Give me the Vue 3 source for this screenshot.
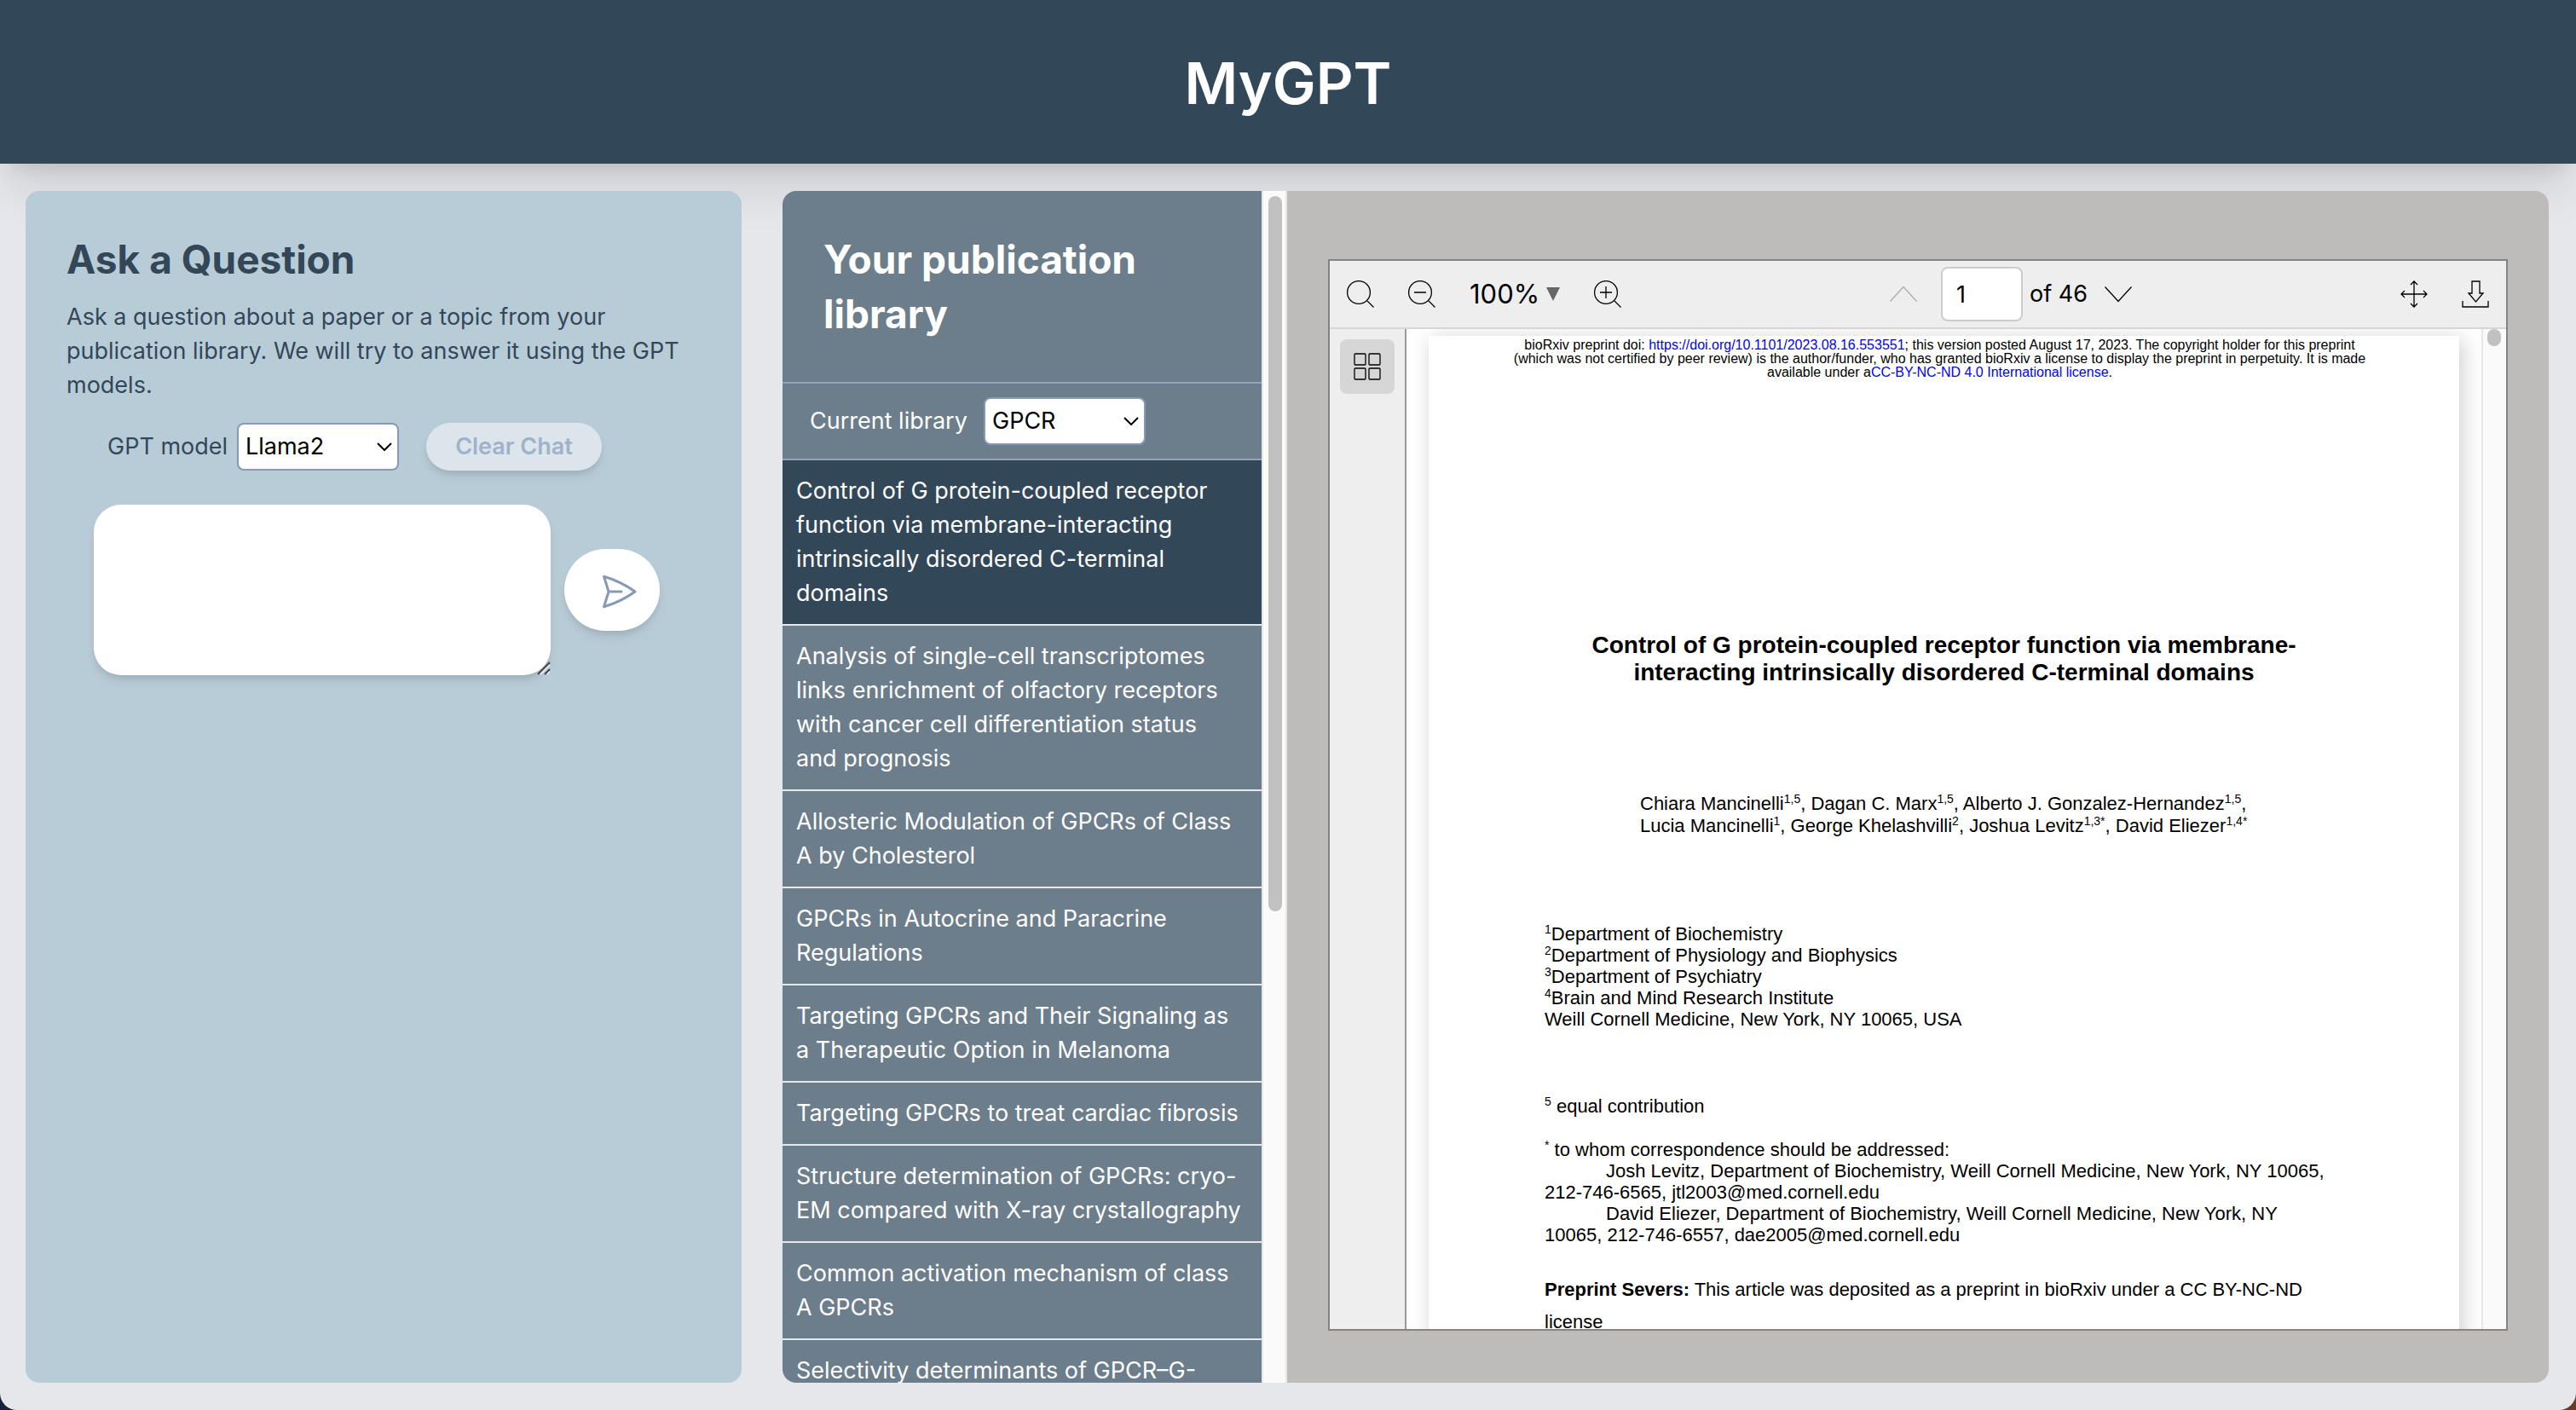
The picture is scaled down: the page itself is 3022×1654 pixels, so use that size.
<script setup>
import { ref } from 'vue'

const model = ref('Llama2')
const library = ref('GPCR')
const question = ref('')
const page = ref('1')
const selected = ref(0)

const papers = [
  'Control of G protein-coupled receptor function via membrane-interacting intrinsically disordered C-terminal domains',
  'Analysis of single-cell transcriptomes links enrichment of olfactory receptors with cancer cell differentiation status and\u00a0prognosis',
  'Allosteric Modulation of GPCRs of Class A by Cholesterol',
  'GPCRs in Autocrine and Paracrine Regulations',
  'Targeting GPCRs and Their Signaling as a\u00a0Therapeutic Option in Melanoma',
  'Targeting GPCRs to treat cardiac fibrosis',
  'Structure determination of GPCRs: cryo-EM compared with X-ray crystallography',
  'Common activation mechanism of class A GPCRs',
  'Selectivity determinants of GPCR–G-',
]

const departments = [
  'Department of Biochemistry',
  'Department of Physiology and Biophysics',
  'Department of Psychiatry',
  'Brain and Mind Research Institute',
]
</script>

<template>
  <div class="shell">
    <header class="banner">
      <h1>MyGPT</h1>
    </header>
    <main class="workspace">
      <section class="ask">
        <h2>Ask a Question</h2>
        <p class="intro">Ask a question about a paper or a topic from your publication library. We will try to answer it using the GPT models.</p>
        <div class="model-row">
          <label for="model">GPT model</label>
          <span class="picker">
            <select id="model" v-model="model"><option>Llama2</option></select>
            <svg viewBox="0 0 18 10"><path d="M1 1l8 8 8-8" /></svg>
          </span>
          <button class="clear" type="button" disabled>Clear Chat</button>
        </div>
        <form class="prompt" @submit.prevent>
          <div class="question">
            <textarea v-model="question" aria-label="Question"></textarea>
            <svg viewBox="0 0 16 16"><path d="M1 15L15 1M9 15l6-6" /><path class="glint" d="M4 15L15 4M12 15l3-3" /></svg>
          </div>
          <button class="send" type="submit" aria-label="Send">
            <svg viewBox="0 0 24 24"><path d="M6 12L3.269 3.126A59.768 59.768 0 0121.485 12 59.77 59.77 0 013.27 20.876L5.999 12zm0 0h7.5" /></svg>
          </button>
        </form>
      </section>

      <div class="reader">
        <section class="library">
          <h2>Your publication library</h2>
          <div class="library-row">
            <label for="library">Current library</label>
            <span class="picker">
              <select id="library" v-model="library"><option>GPCR</option></select>
              <svg viewBox="0 0 18 10"><path d="M1 1l8 8 8-8" /></svg>
            </span>
          </div>
          <ul class="papers">
            <li v-for="(paper, i) in papers" :key="paper">
              <button type="button" :class="{ active: i === selected }" @click="selected = i">{{ paper }}</button>
            </li>
          </ul>
        </section>
        <div class="list-track"><div class="list-thumb"></div></div>

        <section class="viewer-area">
          <div class="viewer">
            <div class="toolbar">
              <button type="button" aria-label="Search">
                <svg viewBox="0 0 32 32"><circle cx="14" cy="14" r="13.4" /><path d="M24 24L31.500 31.500" /></svg>
              </button>
              <button type="button" aria-label="Zoom out" class="zoom-out">
                <svg viewBox="0 0 32 32"><circle cx="14" cy="14" r="13.4" /><path d="M24 24L31.500 31.500M7 14h14" /></svg>
              </button>
              <button type="button" class="zoom-level">100%<svg viewBox="0 0 16 16"><path d="M0 0h16L8 16z" /></svg></button>
              <button type="button" aria-label="Zoom in">
                <svg viewBox="0 0 32 32"><circle cx="14" cy="14" r="13.4" /><path d="M24 24L31.500 31.500M7 14h14M14 7v14" /></svg>
              </button>
              <div class="pager">
                <button type="button" aria-label="Previous page" class="dim">
                  <svg viewBox="0 0 32 32"><path d="M0.500 24.500L16 7.500l15.500 17" /></svg>
                </button>
                <input v-model="page" type="text" aria-label="Page" />
                <span>of 46</span>
                <button type="button" aria-label="Next page">
                  <svg viewBox="0 0 32 32"><path d="M0.500 7.500l15.500 17L31.500 7.500" /></svg>
                </button>
              </div>
              <div class="tools">
                <button type="button" aria-label="Pan">
                  <svg viewBox="0 0 32 32"><path d="M16 1v30M1 16h30M12 5l4-4 4 4M12 27l4 4 4-4M5 12l-4 4 4 4M27 12l4 4-4 4" /></svg>
                </button>
                <button type="button" aria-label="Download">
                  <svg viewBox="0 0 32 32"><path d="M12 1h9v14h4l-8.500 10L8 15h4zM1 24v7h30v-7" /></svg>
                </button>
              </div>
            </div>
            <div class="document">
              <div class="rail">
                <button type="button" aria-label="Thumbnails">
                  <svg viewBox="0 0 32 32"><rect x="1" y="1" width="13" height="13" rx="1" /><rect x="18" y="1" width="13" height="13" rx="1" /><rect x="1" y="18" width="13" height="13" rx="1" /><rect x="18" y="18" width="13" height="13" rx="1" /></svg>
                </button>
              </div>
              <div class="canvas">
                <article class="sheet">
                  <p class="notice">
                    bioRxiv preprint doi: <a href="#doi">https://doi.org/10.1101/2023.08.16.553551</a>; this version posted August 17, 2023. The copyright holder for this preprint<br />
                    (which was not certified by peer review) is the author/funder, who has granted bioRxiv a license to display the preprint in perpetuity. It is made<br />
                    available under a<a href="#license">CC-BY-NC-ND 4.0 International license</a>.
                  </p>
                  <h3>Control of G protein-coupled receptor function via membrane-<br />interacting intrinsically disordered C-terminal domains</h3>
                  <p class="authors">
                    Chiara Mancinelli<sup>1,5</sup>, Dagan C. Marx<sup>1,5</sup>, Alberto J. Gonzalez-Hernandez<sup>1,5</sup>,<br />
                    Lucia Mancinelli<sup>1</sup>, George Khelashvilli<sup>2</sup>, Joshua Levitz<sup>1,3*</sup>, David Eliezer<sup>1,4*</sup>
                  </p>
                  <p class="departments">
                    <template v-for="(name, i) in departments" :key="name"><sup>{{ i + 1 }}</sup>{{ name }}<br /></template>
                    Weill Cornell Medicine, New York, NY 10065, USA
                  </p>
                  <p class="equal"><sup>5</sup> equal contribution</p>
                  <p><sup>*</sup> to whom correspondence should be addressed:</p>
                  <p class="contact">Josh Levitz, Department of Biochemistry, Weill Cornell Medicine, New York, NY 10065,<br />212-746-6565, jtl2003@med.cornell.edu</p>
                  <p class="contact">David Eliezer, Department of Biochemistry, Weill Cornell Medicine, New York, NY<br />10065, 212-746-6557, dae2005@med.cornell.edu</p>
                  <p class="servers"><strong>Preprint Severs:</strong> This article was deposited as a preprint in bioRxiv under a CC BY-NC-ND<br />license</p>
                </article>
              </div>
              <div class="doc-track"><div class="doc-thumb"></div></div>
            </div>
          </div>
        </section>
      </div>
    </main>
  </div>
</template>

<style>
body {
  background: linear-gradient(90deg, #14243c, #6b3a20);
}
</style>

<style scoped>
* {
  box-sizing: border-box;
}
h1, h2, h3, p, ul {
  margin: 0;
  padding: 0;
}
button, select, input, textarea {
  font: inherit;
  color: inherit;
  border: 0;
  margin: 0;
  padding: 0;
  background: none;
}
svg {
  display: block;
  fill: none;
  stroke: currentColor;
}
.shell {
  height: 100vh;
  display: flex;
  flex-direction: column;
  overflow: hidden;
  background: #e5e7eb;
  border-radius: 0 0 20px 20px;
  font-family: Inter, "Liberation Sans", sans-serif;
  font-size: 27px;
  line-height: 40px;
  color: #334759;
}
.banner {
  height: 192px;
  flex: none;
  display: flex;
  align-items: center;
  justify-content: center;
  padding-top: 2px;
  background: #324758;
  color: #fff;
  box-shadow: 0 40px 50px -10px rgba(0, 0, 0, 0.1), 0 16px 20px -12px rgba(0, 0, 0, 0.1);
}
h1 {
  font-size: 68px;
  line-height: 80px;
  font-weight: 600;
}
h2 {
  font-size: 46px;
  line-height: 64px;
  font-weight: 700;
}
.workspace {
  flex: 1;
  min-height: 0;
  position: relative;
  display: grid;
  grid-template-columns: minmax(0, 840fr) minmax(0, 2072fr);
  grid-template-rows: minmax(0, 1fr);
  gap: 48px;
  padding: 32px 32px 32px 30px;
}
.ask {
  padding: 48px;
  border-radius: 16px;
  background: #b8ccd7;
}
.intro {
  margin-top: 16px;
}
.model-row {
  display: flex;
  align-items: center;
  margin-top: 24px;
  padding-left: 48px;
}
.model-row label {
  width: 152px;
  white-space: nowrap;
}
.picker {
  display: grid;
  grid-template-columns: 190px;
  align-items: center;
}
.picker select {
  grid-area: 1 / 1;
  height: 56px;
  padding: 0 8px;
  appearance: none;
  border: 2px solid #8799b5;
  border-radius: 8px;
  background: #fff;
  color: #000;
}
.picker svg {
  grid-area: 1 / 1;
  justify-self: end;
  width: 18px;
  height: 10px;
  margin-right: 8px;
  color: #000;
  stroke-width: 2;
  pointer-events: none;
}
.clear {
  width: 206px;
  height: 56px;
  margin-left: 32px;
  border-radius: 28px;
  background: #dde5ec;
  color: #9fb2c9;
  font-weight: 600;
  box-shadow: 0 8px 12px -2px rgba(0, 0, 0, 0.1), 0 4px 8px -4px rgba(0, 0, 0, 0.1);
}
.prompt {
  display: flex;
  align-items: center;
  gap: 16px;
  margin-top: 40px;
  padding-left: 32px;
}
.question {
  display: grid;
}
.question textarea {
  grid-area: 1 / 1;
  width: 536px;
  height: 200px;
  padding: 16px 24px;
  border-radius: 32px;
  background: #fff;
  resize: none;
  box-shadow: 0 8px 12px -2px rgba(0, 0, 0, 0.1), 0 4px 8px -4px rgba(0, 0, 0, 0.1);
}
.question svg {
  grid-area: 1 / 1;
  place-self: end;
  width: 16px;
  height: 16px;
  color: #444;
  stroke-width: 2;
}
.question .glint {
  stroke: #e5e7eb;
}
.send {
  width: 112px;
  height: 96px;
  padding: 4px 24px 0 40px;
  border-radius: 48px;
  background: #fff;
  color: #8799b8;
  box-shadow: 0 8px 12px -2px rgba(0, 0, 0, 0.1), 0 4px 8px -4px rgba(0, 0, 0, 0.1);
}
.send svg {
  width: 48px;
  height: 48px;
  stroke-width: 1.5;
  stroke-linejoin: round;
  stroke-linecap: round;
}
.reader {
  display: grid;
  grid-template-columns: minmax(0, 562fr) 30px minmax(0, 1480fr);
  grid-template-rows: minmax(0, 1fr);
  overflow: hidden;
  border-radius: 16px;
}
.library {
  overflow: hidden;
  background: #6c7d8b;
  color: #fff;
}
.library h2 {
  padding: 48px;
}
.library-row {
  display: flex;
  align-items: center;
  gap: 16px;
  padding: 16px 32px;
  border: solid #94a3b8;
  border-width: 2px 0;
}
.library-row label {
  width: 188px;
  white-space: nowrap;
}
.papers {
  list-style: none;
}
.papers li {
  border-bottom: 2px solid #e5e7eb;
}
.papers button {
  display: block;
  width: 100%;
  padding: 16px;
  text-align: left;
}
.papers .active {
  background: #324758;
}
.list-track {
  padding: 6px;
  background: #fafafa;
  border: solid #e8e8e8;
  border-width: 0 2px;
}
.list-thumb {
  width: 16px;
  height: 60.5%;
  border-radius: 8px;
  background: #c1c1c1;
}
.viewer-area {
  display: flex;
  padding: 80px 48px 61px;
  background: #bdbcba;
}
.viewer {
  flex: 1;
  min-width: 0;
  display: flex;
  flex-direction: column;
  border: 2px solid #848484;
  background: #eee;
  color: #000;
}
.toolbar {
  height: 80px;
  flex: none;
  display: flex;
  align-items: center;
  padding: 0 20px;
  border-bottom: 2px solid #d6d6d6;
}
.toolbar svg, .rail svg {
  width: 32px;
  height: 32px;
  stroke-width: 1.3;
}
.zoom-out {
  margin-left: 40px;
}
.toolbar .zoom-level {
  display: flex;
  align-items: center;
  gap: 8px;
  margin: 0 40px;
  font-size: 31px;
}
.toolbar .zoom-level svg {
  width: 16px;
  height: 16px;
  fill: #666;
  stroke: none;
}
.pager {
  display: flex;
  align-items: center;
  margin: 0 auto;
}
.pager input {
  width: 96px;
  height: 64px;
  margin: 0 8px 0 28px;
  padding: 0 16px;
  border: 2px solid #ccc;
  border-radius: 8px;
  background: #fff;
}
.pager span {
  margin-right: 20px;
}
.dim {
  color: #aaa;
}
.tools {
  display: flex;
  gap: 40px;
}
.document {
  flex: 1;
  min-height: 0;
  display: flex;
  overflow: hidden;
}
.rail {
  width: 90px;
  flex: none;
  padding: 12px;
  border-right: 2px solid #999;
}
.rail button {
  width: 64px;
  height: 64px;
  padding: 16px;
  border-radius: 8px;
  background: #d6d6d6;
}
.canvas {
  flex: 1;
  min-width: 0;
  padding: 8px 26px 0;
  overflow: hidden;
  background: #fff;
}
.sheet {
  min-height: 1500px;
  padding: 3px 136px 0;
  background: #fff;
  box-shadow: 4px 4px 24px rgba(0, 0, 0, 0.2);
  font-family: "Liberation Sans", Arial, sans-serif;
  font-size: 22px;
  line-height: 25px;
  white-space: nowrap;
}
.sheet sup {
  font-size: 14px;
  line-height: 0;
}
.sheet a {
  color: #00f;
  text-decoration: none;
}
.notice {
  margin: 0 -30px 0 -40px;
  font-size: 16px;
  line-height: 16px;
  text-align: center;
}
.sheet h3 {
  margin-top: 296px;
  font-size: 28px;
  line-height: 32px;
  text-align: center;
}
.authors {
  margin-top: 125px;
  padding-left: 112px;
  line-height: 26px;
}
.departments {
  margin-top: 101px;
}
.equal {
  margin: 77px 0 26px;
}
.contact {
  text-indent: 72px;
}
.servers {
  margin-top: 33px;
  line-height: 38px;
}
.doc-track {
  width: 29px;
  flex: none;
  padding: 0 5px;
  border-left: 2px solid #e8e8e8;
  background: #fafafa;
}
.doc-thumb {
  width: 16px;
  height: 20px;
  border-radius: 8px;
  background: #c1c1c1;
}
</style>
